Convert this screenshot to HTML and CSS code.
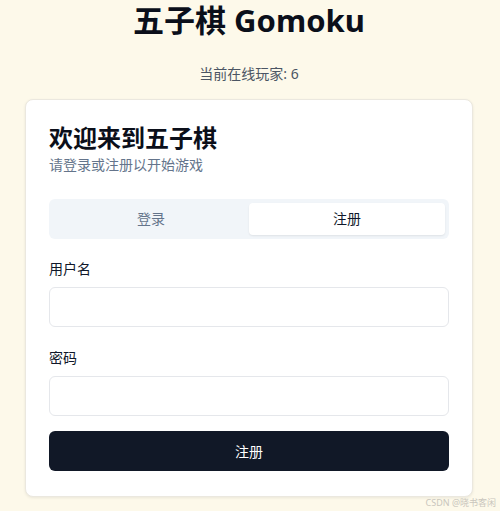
FILE: index.html
```html
<!DOCTYPE html>
<html lang="zh-CN">
<head>
	<meta charset="UTF-8">
	<title>五子棋 Gomoku</title>
	<link rel="stylesheet" href="styles.css">
</head>
<body>
	<div class="page">
		<h1 class="title">五子棋 Gomoku</h1>
		<p class="online">当前在线玩家: <span class="num">6</span></p>
		<div class="card">
			<h2 class="card-title">欢迎来到五子棋</h2>
			<p class="card-desc">请登录或注册以开始游戏</p>
			<ul class="tabs">
				<li class="tab">登录</li>
				<li class="tab active">注册</li>
			</ul>
			<form class="form">
				<label class="field">
					<span class="label">用户名</span>
					<input type="text" class="input">
				</label>
				<label class="field">
					<span class="label">密码</span>
					<input type="password" class="input">
				</label>
				<button type="button" class="submit">注册</button>
			</form>
		</div>
	</div>
	<div class="mark">CSDN @晓书客闲</div>
</body>
</html>
```

FILE: styles.css
```css
*{margin: 0;padding: 0;box-sizing: border-box;}
html,body{
	height: 100%;
}
body{
	background-color: #fdf9ea;
	font-family: "Noto Sans", "Noto Sans CJK SC", sans-serif;
	color: #0f172a;
}
li{
	list-style: none;
}
.page{
	width: 448px;
	margin-left: 25px;
	padding-top: 2px;
}
.title{
	text-align: center;
	font-size: 31px;
	line-height: 36px;
	font-weight: 700;
	color: #0b0f1a;
}
.online{
	margin-top: 26px;
	text-align: center;
	font-size: 14px;
	line-height: 20px;
	color: #4b5563;
}
.card{
	margin-top: 15px;
	padding: 24px 23px 25px;
	background-color: #fff;
	border: 1px solid #ebe8df;
	border-radius: 8px;
	box-shadow: 0 1px 3px rgba(0, 0, 0, .08);
}
.card-title{
	font-size: 24px;
	line-height: 28px;
	font-weight: 700;
	color: #0b0f1a;
}
.card-desc{
	margin-top: 3px;
	font-size: 14px;
	line-height: 20px;
	color: #64748b;
}
.tabs{
	display: grid;
	grid-template-columns: 1fr 1fr;
	margin-top: 24px;
	padding: 4px;
	height: 40px;
	background-color: #f1f5f9;
	border-radius: 6px;
}
.tab{
	text-align: center;
	font-size: 14px;
	line-height: 32px;
	color: #64748b;
	border-radius: 4px;
}
.tab.active{
	background-color: #fff;
	color: #0f172a;
	box-shadow: 0 1px 2px rgba(0, 0, 0, .08);
}
.form{
	display: flex;
	flex-direction: column;
	margin-top: 22px;
}
.field{
	display: flex;
	flex-direction: column;
	gap: 10px;
	margin-bottom: 23px;
}
.field + .field{
	margin-bottom: 15px;
}
.label{
	font-size: 14px;
	line-height: 16px;
	color: #0f172a;
}
.input{
	height: 40px;
	border: 1px solid #e5e7eb;
	border-radius: 6px;
	background-color: #fff;
	outline: none;
}
.submit{
	height: 40px;
	border: none;
	border-radius: 6px;
	background-color: #111827;
	color: #fff;
	font-family: inherit;
	font-size: 14px;
}
.mark{
	position: absolute;
	right: 4px;
	bottom: 2px;
	font-size: 9px;
	color: #c9c6bd;
}
```
